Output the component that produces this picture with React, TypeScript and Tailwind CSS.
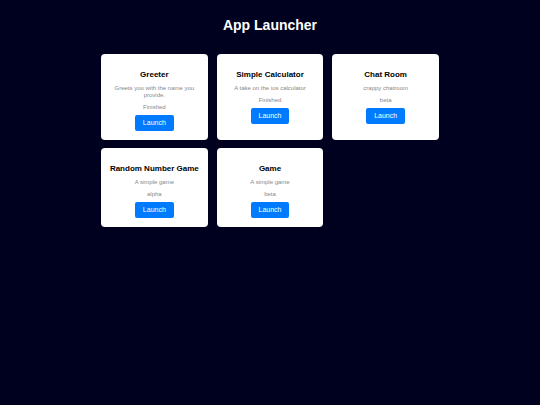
interface App {
  name: string;
  description: string;
  status: string;
}

const apps: App[] = [
  {
    name: "Greeter",
    description: "Greets you with the name you provide.",
    status: "Finished",
  },
  {
    name: "Simple Calculator",
    description: "A take on the ios calculator",
    status: "Finished",
  },
  { name: "Chat Room", description: "crappy chatroom", status: "beta" },
  { name: "Random Number Game", description: "A simple game", status: "alpha" },
  { name: "Game", description: "A simple game", status: "beta" },
];

function AppCard({ app }: { app: App }) {
  return (
    <div className="flex flex-col items-center rounded-[4px] bg-white px-2 pt-4 pb-[9px] text-center">
      <h2 className="text-[8px] leading-[10px] font-bold whitespace-nowrap text-black">
        {app.name}
      </h2>
      <p className="mt-[5px] text-[6px] leading-[7px] text-[#888888]">
        {app.description}
      </p>
      <p className="mt-[5px] text-[6px] leading-[7px] text-[#888888]">
        {app.status}
      </p>
      <button
        type="button"
        aria-label={`Launch ${app.name}`}
        className="mt-1 cursor-pointer rounded-[2px] bg-[#007bff] px-2 py-1 text-[7px] leading-[8px] text-white hover:bg-[#0056b3]"
      >
        Launch
      </button>
    </div>
  );
}

export default function AppLauncher() {
  return (
    <div className="min-h-screen bg-[#00001f] px-4 pt-4 pb-8 font-['Liberation_Sans',Arial,sans-serif]">
      <h1 className="text-center text-[14px] leading-[18px] font-bold text-white">
        App Launcher
      </h1>

      <main className="mx-auto mt-5 grid max-w-[338px] grid-cols-3 gap-x-[9px] gap-y-2">
        {apps.map((app) => (
          <AppCard key={app.name} app={app} />
        ))}
      </main>
    </div>
  );
}
